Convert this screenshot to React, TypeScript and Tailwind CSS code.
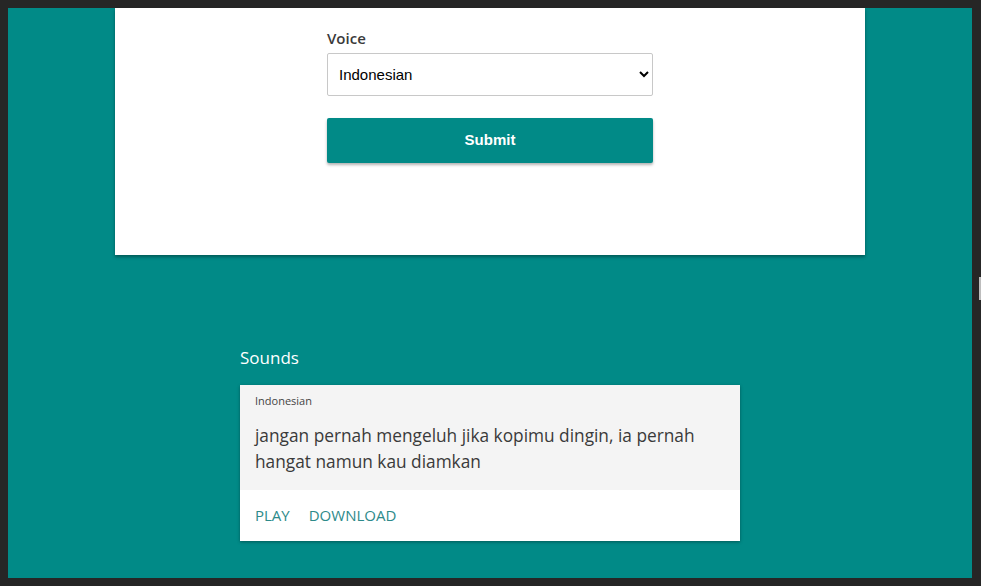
export default function App() {
  return (
    <div className="flex h-[586px] w-[981px] bg-[#262626] pt-[8px] pb-[8px] pl-[8px]">
      <div className="h-full w-[964px] bg-[#018a87]">
        <div className="ml-[107px] h-[247px] w-[750px] bg-white pt-[20px] pl-[212px] shadow-[0_2px_3px_rgba(0,0,0,0.35)]">
          <div className="w-[326px]">
            <label className="block text-[15px] leading-[20px] font-semibold text-[#3a3a3a]" style={{ fontFamily: '"Open Sans", sans-serif' }}>
              Voice
            </label>
            <select
              className="mt-[5px] block h-[43px] w-full rounded-[2px] border border-[#c8c8c8] bg-white pl-[7px] pr-[6px] text-[15px] text-black"
              style={{ fontFamily: '"Liberation Sans", Arial, sans-serif' }}
              defaultValue="id"
            >
              <option value="id">Indonesian</option>
            </select>
            <button
              className="mt-[22px] block h-[45px] w-full rounded-[2px] bg-[#018a87] text-[15px] font-bold text-white shadow-[0_2px_3px_rgba(0,0,0,0.3)]"
              style={{ fontFamily: '"Liberation Sans", Arial, sans-serif' }}
            >
              Submit
            </button>
          </div>
        </div>

        <div className="ml-[232px] mt-[91px] w-[500px]" style={{ fontFamily: '"Open Sans", sans-serif' }}>
          <h2 className="text-[17px] leading-[24px] text-white">Sounds</h2>
          <div className="mt-[15px] bg-white shadow-[0_1px_3px_rgba(0,0,0,0.35)]">
            <div className="h-[105px] bg-[#f4f4f4] px-[15px] pt-[8px]">
              <div className="text-[11px] leading-[16px] text-[#444]">Indonesian</div>
              <p className="mt-[14px] text-[17.3px] leading-[26px] text-[#3a3a3a]">
                jangan pernah mengeluh jika kopimu dingin, ia pernah hangat namun kau diamkan
              </p>
            </div>
            <div className="flex h-[51px] items-center gap-[19px] px-[15px] text-[15px] text-[#2d8a8a]">
              <span>PLAY</span>
              <span>DOWNLOAD</span>
            </div>
          </div>
        </div>
      </div>
      <div className="flex-1">
        <div className="ml-[7px] mt-[269px] h-[23px] w-[2px] bg-[#bdbdbd]" />
      </div>
    </div>
  );
}
